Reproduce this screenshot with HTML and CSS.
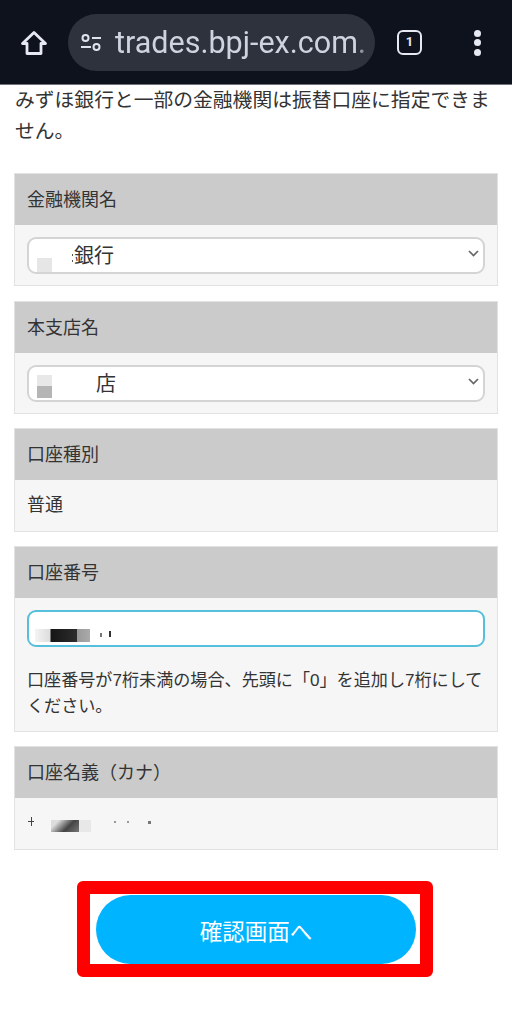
FILE: index.html
```html
<!DOCTYPE html>
<html lang="ja">
<head>
    <meta charset="UTF-8">
    <meta name="viewport" content="width=device-width, initial-scale=1.0">
    <title>振替口座</title>
    <link rel="stylesheet" href="styles.css">
</head>
<body>

    <!-- Browser toolbar -->
    <div class="toolbar">
        <svg class="home-icon" width="28" height="28" viewBox="0 0 28 28" fill="none" stroke="#e6e9f2" stroke-width="2.8" stroke-linejoin="round">
            <path d="M2.5 14.5 14 3.5l11.5 11H21v10H7v-10z"/>
        </svg>
        <div class="url-bar">
            <svg class="tune-icon" width="22" height="18" viewBox="0 0 22 18" fill="none" stroke="#dfe3ee" stroke-width="2">
                <circle cx="5.5" cy="4" r="3"/>
                <path d="M12 4h9"/>
                <path d="M1 13h10"/>
                <circle cx="16.5" cy="13" r="3"/>
            </svg>
            <span class="url-text">trades.bpj-ex.com.</span>
        </div>
        <div class="tab-count">1</div>
        <div class="menu-dots"><span></span><span></span><span></span></div>
    </div>

    <p class="intro">みずほ銀行と一部の金融機関は振替口座に指定できません。</p>

    <div class="card">
        <div class="card-title">金融機関名</div>
        <div class="card-body">
            <div class="field">
                <span class="mask mask-bank"></span>銀行
                <svg class="chevron" width="11" height="7" viewBox="0 0 11 7" fill="none" stroke="#666" stroke-width="1.7"><path d="M1 1l4.5 4.5L10 1"/></svg>
            </div>
        </div>
    </div>

    <div class="card">
        <div class="card-title">本支店名</div>
        <div class="card-body">
            <div class="field">
                <span class="mask mask-branch"></span>店
                <svg class="chevron" width="11" height="7" viewBox="0 0 11 7" fill="none" stroke="#666" stroke-width="1.7"><path d="M1 1l4.5 4.5L10 1"/></svg>
            </div>
        </div>
    </div>

    <div class="card">
        <div class="card-title">口座種別</div>
        <div class="card-body plain">普通</div>
    </div>

    <div class="card">
        <div class="card-title">口座番号</div>
        <div class="card-body">
            <div class="field focused"><span class="mask mask-number"></span></div>
            <p class="note">口座番号が7桁未満の場合、先頭に「0」を追加し7桁にしてください。</p>
        </div>
    </div>

    <div class="card">
        <div class="card-title">口座名義（カナ）</div>
        <div class="card-body plain"><span class="mask mask-name"></span></div>
    </div>

    <div class="highlight">
        <button class="next-button">確認画面へ</button>
    </div>

</body>
</html>
```

FILE: styles.css
```css
body {
    margin: 0;
    background-color: #fff;
    color: #333;
    font-family: "Liberation Sans", "Noto Sans CJK JP", sans-serif;
    font-size: 18px;
    overflow: hidden;
}

.toolbar {
    display: flex;
    align-items: center;
    height: 85px;
    padding: 1px 0 0 20px;
    box-sizing: border-box;
    background-color: #0e121c;
    border-bottom: 1px solid #6f7278;
}

.home-icon {
    flex-shrink: 0;
}

.url-bar {
    display: flex;
    align-items: center;
    width: 307px;
    height: 57px;
    margin-left: 20px;
    padding-left: 12px;
    box-sizing: border-box;
    border-radius: 29px;
    background-color: #2e323c;
    overflow: hidden;
    white-space: nowrap;
}

.tune-icon {
    flex-shrink: 0;
}

.url-text {
    margin-left: 13px;
    color: #cfd3e0;
    font-family: Roboto, sans-serif;
    font-size: 30.5px;
    mask-image: linear-gradient(90deg, #000 96%, rgba(0, 0, 0, 0.35));
}

.tab-count {
    width: 25px;
    height: 25px;
    margin-left: 22px;
    box-sizing: border-box;
    border: 2.5px solid #e6e9f2;
    border-radius: 6px;
    color: #e6e9f2;
    font-family: Roboto, sans-serif;
    font-size: 13px;
    font-weight: bold;
    line-height: 20px;
    text-align: center;
}

.menu-dots {
    display: flex;
    flex-direction: column;
    gap: 2.5px;
    margin-left: 52px;
}

.menu-dots span {
    width: 7px;
    height: 7px;
    border-radius: 50%;
    background-color: #e6e9f2;
}

.intro {
    margin: 0 20px 26px 15px;
    line-height: 31px;
    font-size: 19.8px;
}

.card {
    margin: 0 14px 14.5px;
    border: 1px solid #e2e2e2;
    background-color: #f6f6f6;
}

.card-title {
    height: 51px;
    padding-left: 12px;
    background-color: #cbcbcb;
    line-height: 53px;
}

.card-body {
    padding: 12px 12px 11px;
}

.card-body.plain {
    height: 50.5px;
    padding: 0 12px;
    box-sizing: border-box;
    line-height: 50px;
}

.field {
    position: relative;
    height: 37px;
    padding-left: 8px;
    box-sizing: border-box;
    border: 2px solid #d4d4d4;
    border-radius: 9px;
    background-color: #fff;
    font-size: 20px;
    line-height: 35px;
}

.field.focused {
    border-color: #56bfdc;
}

.chevron {
    position: absolute;
    right: 4px;
    top: 11px;
}

/* Blurred out values */
.mask {
    display: inline-block;
    height: 32px;
    vertical-align: middle;
}

.mask-bank {
    width: 37px;
    background:
        linear-gradient(#555, #555) 35px 12px / 1px 2px no-repeat,
        linear-gradient(#555, #555) 35px 18px / 1px 2px no-repeat,
        linear-gradient(#e6e6e6, #e6e6e6) 0 16px / 15px 14px no-repeat;
}

.mask-branch {
    width: 59px;
    background:
        linear-gradient(#e8e8e8, #e8e8e8) 0 6px / 15px 11px no-repeat,
        linear-gradient(#b5b5b5, #b5b5b5) 0 17px / 15px 12px no-repeat;
}

.mask-number {
    width: 78px;
    margin: 0 0 2px -2px;
    background:
        linear-gradient(#333, #333) 74px 17px / 2px 6px no-repeat,
        linear-gradient(#777, #777) 65px 19px / 2px 4px no-repeat,
        linear-gradient(90deg, #f4f4f4, #ddd 15px, #151515 16px, #2d2d2d 42px, #999 42px, #aaa 55px, #fff 55px) 0 15px / 100% 13px no-repeat;
}

.mask-name {
    width: 150px;
    height: 40px;
    margin-left: -1px;
    background:
        linear-gradient(#444, #444) 5px 13px / 1px 9px no-repeat,
        linear-gradient(#444, #444) 2px 17px / 6px 1px no-repeat,
        linear-gradient(#999, #999) 88px 17px / 2px 2px no-repeat,
        linear-gradient(#999, #999) 101px 17px / 2px 2px no-repeat,
        linear-gradient(#777, #777) 122px 17px / 3px 3px no-repeat,
        linear-gradient(135deg, #ddd 20%, #444 60%, #777) 25px 16px / 28px 12px no-repeat,
        linear-gradient(#e8e8e8, #e8e8e8) 53px 16px / 12px 12px no-repeat;
}

.note {
    margin: 20.5px 0 0;
    font-size: 17.1px;
    line-height: 26px;
}

.highlight {
    width: 320px;
    margin: 31.5px 0 0 77px;
    padding: 1px 4px 0 6px;
    border: 13px solid #fe0000;
    border-radius: 6px;
}

.next-button {
    display: block;
    width: 320px;
    height: 69px;
    border: none;
    border-radius: 35px;
    background-color: #00b4ff;
    color: #fff;
    font-family: "Liberation Sans", "Noto Sans CJK JP", sans-serif;
    font-size: 22.5px;
}
```
